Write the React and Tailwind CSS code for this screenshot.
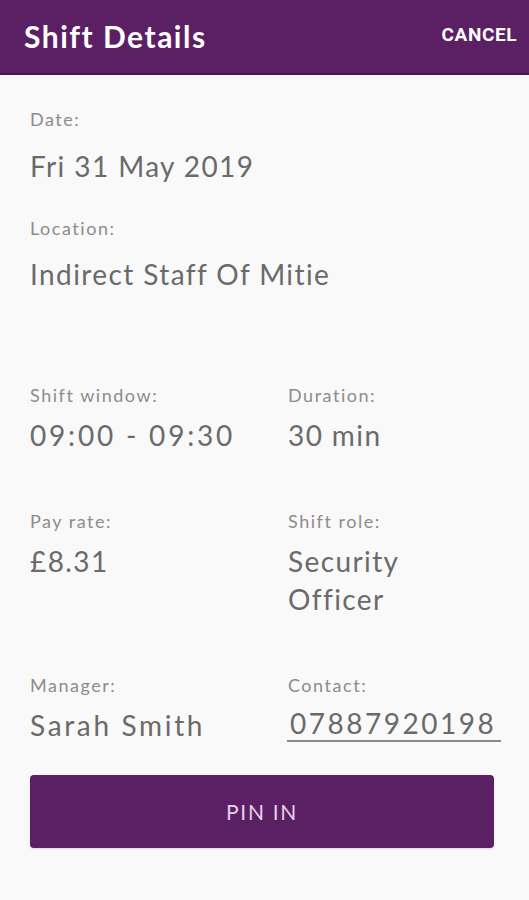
import React from 'react';

const Label = ({ children }) => (
  <div className="text-[18px] leading-[24px] tracking-[0.085em] text-[#8c8c8c]">{children}</div>
);

const Value = ({ children, className = '' }) => (
  <div className={`text-[28px] leading-[38px] text-[#6a6a6a] ${className}`}>{children}</div>
);

export default function App() {
  return (
    <div className="w-[529px] h-[900px] bg-[#f9f9f9] font-['Lato',_'Open_Sans',_sans-serif] overflow-hidden">
      {/* Header */}
      <div className="h-[75px] bg-[#5b1f64] border-b-2 border-[#4a1552] flex items-center justify-between pl-[24px] pr-[12px]">
        <h1 className="text-white text-[30px] font-bold leading-none tracking-[0.05em] -mt-[2px]">Shift Details</h1>
        <button className="text-white text-[19px] font-bold font-['Roboto',_sans-serif] tracking-[0.03em] -mt-[2px]">CANCEL</button>
      </div>

      {/* Details */}
      <div className="px-[30px] pt-[32px]">
        <Label>Date:</Label>
        <Value className="mt-[16px] tracking-[0.05em]">Fri 31 May 2019</Value>

        <div className="mt-[31px]">
          <Label>Location:</Label>
          <Value className="mt-[15px] tracking-[0.05em]">Indirect Staff Of Mitie</Value>
        </div>

        <div className="grid grid-cols-[258px_1fr] mt-[90px]">
          <div>
            <Label>Shift window:</Label>
            <Value className="mt-[9px] tracking-[0.1em]">09:00 - 09:30</Value>
          </div>
          <div>
            <Label>Duration:</Label>
            <Value className="mt-[9px] tracking-[0.05em]">30 min</Value>
          </div>
        </div>

        <div className="grid grid-cols-[258px_1fr] mt-[55px]">
          <div>
            <Label>Pay rate:</Label>
            <Value className="mt-[9px] tracking-[0.05em]">£8.31</Value>
          </div>
          <div>
            <Label>Shift role:</Label>
            <Value className="mt-[9px] tracking-[0.05em]">Security<br />Officer</Value>
          </div>
        </div>

        <div className="grid grid-cols-[258px_1fr] mt-[55px]">
          <div>
            <Label>Manager:</Label>
            <Value className="mt-[9px] tracking-[0.095em]">Sarah Smith</Value>
          </div>
          <div>
            <Label>Contact:</Label>
            <div className="mt-[9px]">
              <span className="inline-block text-[28px] leading-[34px] tracking-[0.09em] text-[#6a6a6a] border-b-2 border-[#8a8a8a] pl-[3px] pr-[5px] -ml-[1px]">
                07887920198
              </span>
            </div>
          </div>
        </div>

        <button className="mt-[31px] w-[464px] h-[73px] rounded-[4px] bg-[#5b1f64] text-[#e6d0ea] text-[21px] tracking-[0.08em] shadow-sm">
          PIN IN
        </button>
      </div>
    </div>
  );
}
